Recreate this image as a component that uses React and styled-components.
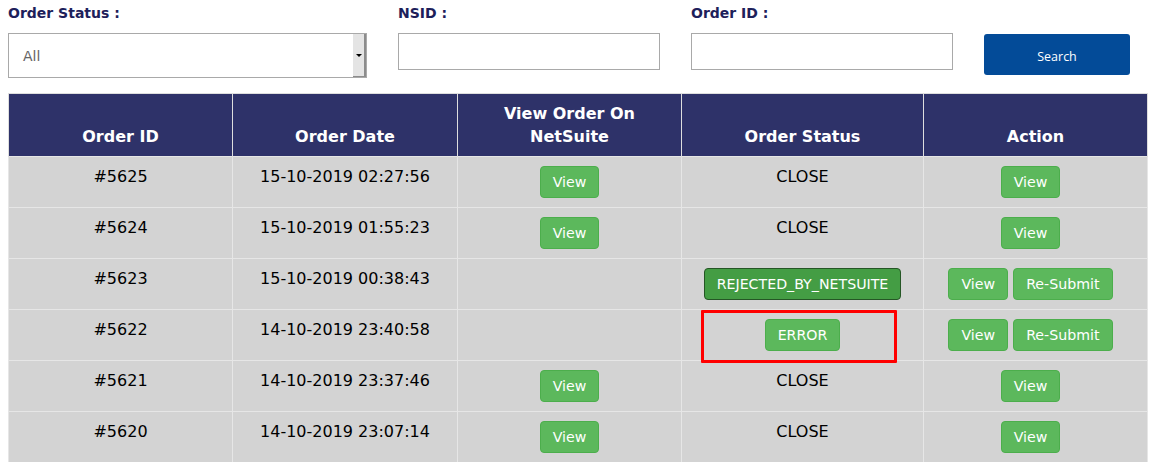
import styled, { createGlobalStyle } from "styled-components";

const orders = [
  { id: "#5625", date: "15-10-2019 02:27:56", netsuite: true, status: "CLOSE" },
  { id: "#5624", date: "15-10-2019 01:55:23", netsuite: true, status: "CLOSE" },
  { id: "#5623", date: "15-10-2019 00:38:43", netsuite: false, status: "REJECTED_BY_NETSUITE" },
  { id: "#5622", date: "14-10-2019 23:40:58", netsuite: false, status: "ERROR", flagged: true },
  { id: "#5621", date: "14-10-2019 23:37:46", netsuite: true, status: "CLOSE" },
  { id: "#5620", date: "14-10-2019 23:07:14", netsuite: true, status: "CLOSE" },
];

const App = () => {
  return (
    <StyledPage>
      <GlobalStyle />
      <StyledFilters>
        <StyledField $width="359px">
          <StyledLabel>Order Status :</StyledLabel>
          <StyledSelect>
            <StyledSelectValue>All</StyledSelectValue>
            <StyledSelectArrow>
              <StyledTriangle />
            </StyledSelectArrow>
          </StyledSelect>
        </StyledField>
        <StyledField $width="262px">
          <StyledLabel>NSID :</StyledLabel>
          <StyledInput />
        </StyledField>
        <StyledField $width="262px">
          <StyledLabel>Order ID :</StyledLabel>
          <StyledInput />
        </StyledField>
        <StyledSearch>Search</StyledSearch>
      </StyledFilters>

      <StyledTable>
        <colgroup>
          <col style={{ width: 224 }} />
          <col style={{ width: 225 }} />
          <col style={{ width: 224 }} />
          <col style={{ width: 242 }} />
          <col style={{ width: 224 }} />
        </colgroup>
        <thead>
          <tr>
            <StyledTh>Order ID</StyledTh>
            <StyledTh>Order Date</StyledTh>
            <StyledTh>
              View Order On
              <br />
              NetSuite
            </StyledTh>
            <StyledTh>Order Status</StyledTh>
            <StyledTh>Action</StyledTh>
          </tr>
        </thead>
        <tbody>
          {orders.map((o) => {
            const failed = o.status !== "CLOSE";
            return (
              <tr key={o.id}>
                <StyledTd>{o.id}</StyledTd>
                <StyledTd>{o.date}</StyledTd>
                <StyledTd>{o.netsuite && <StyledButton>View</StyledButton>}</StyledTd>
                <StyledTd>
                  {o.status === "CLOSE" ? (
                    o.status
                  ) : (
                    <StyledButton $active={o.status === "REJECTED_BY_NETSUITE"}>
                      {o.status}
                    </StyledButton>
                  )}
                  {o.flagged && <StyledHighlight />}
                </StyledTd>
                <StyledTd $action>
                  <StyledButtons>
                    <StyledButton>View</StyledButton>
                    {failed && <StyledButton>Re-Submit</StyledButton>}
                  </StyledButtons>
                </StyledTd>
              </tr>
            );
          })}
        </tbody>
      </StyledTable>
    </StyledPage>
  );
};

const GlobalStyle = createGlobalStyle`
  body {
    margin: 0;
    background: #fff;
    font-family: "DejaVu Sans", sans-serif;
  }
`;

const StyledPage = styled.div`
  padding: 0 8px;
  width: 1139px;
`;

const StyledFilters = styled.div`
  display: flex;
  align-items: flex-start;
  gap: 31px;
  height: 93px;
`;

const StyledField = styled.div`
  width: ${(p) => p.$width};
  display: flex;
  flex-direction: column;
`;

const StyledLabel = styled.label`
  font-size: 14px;
  font-weight: bold;
  color: #1d205a;
  line-height: 17px;
  padding-top: 5px;
  height: 28px;
`;

const StyledSelect = styled.div`
  display: flex;
  height: 45px;
  border: 1px solid #a9a9a9;
  box-sizing: border-box;
  background: #fff;
`;

const StyledSelectValue = styled.div`
  flex: 1;
  padding-left: 14px;
  display: flex;
  align-items: center;
  font-size: 14px;
  color: #666;
`;

const StyledSelectArrow = styled.div`
  width: 11px;
  background: #e4e4e4;
  border-right: 2px solid #8c8c8c;
  border-bottom: 1px solid #8c8c8c;
  display: flex;
  align-items: center;
  justify-content: center;
`;

const StyledTriangle = styled.div`
  width: 0;
  height: 0;
  border-left: 3px solid transparent;
  border-right: 3px solid transparent;
  border-top: 3px solid #000;
`;

const StyledInput = styled.input`
  height: 37px;
  box-sizing: border-box;
  border: 1px solid #a9a9a9;
  outline: none;
`;

const StyledSearch = styled.button`
  margin-top: 34px;
  width: 146px;
  height: 41px;
  border: none;
  border-radius: 3px;
  background: #034b98;
  color: #fff;
  font-family: "Open Sans", sans-serif;
  font-size: 12.5px;
  padding-top: 4px;
`;

const StyledTable = styled.table`
  border-collapse: collapse;
  table-layout: fixed;
  width: 1139px;
  border: 1px solid #dedede;
`;

const StyledTh = styled.th`
  background: #2e3269;
  color: #fff;
  font-size: 16px;
  font-weight: bold;
  line-height: 23px;
  padding: 8px 4px;
  height: 46px;
  vertical-align: bottom;
  border: 1px solid #dedede;
  border-bottom: none;
`;

const StyledTd = styled.td`
  position: relative;
  background: #d3d3d3;
  font-size: 16px;
  line-height: 22px;
  text-align: center;
  vertical-align: top;
  padding: 9px 4px;
  padding-left: ${(p) => (p.$action ? "0" : "4px")};
  padding-right: ${(p) => (p.$action ? "10px" : "4px")};
  height: 32px;
  border: 1px solid #e6e6e6;
  color: #000;
`;

const StyledButtons = styled.div`
  display: flex;
  justify-content: center;
  gap: 5px;
`;

const StyledButton = styled.button`
  height: 32px;
  padding: 0 12px;
  border-radius: 4px;
  font-family: "DejaVu Sans", sans-serif;
  font-size: 14.2px;
  color: #fff;
  background: ${(p) => (p.$active ? "#449d44" : "#5cb85c")};
  border: 1px solid ${(p) => (p.$active ? "#255625" : "#4cae4c")};
`;

const StyledHighlight = styled.div`
  position: absolute;
  z-index: 2;
  left: 19px;
  top: 0;
  width: 196px;
  height: 53px;
  box-sizing: border-box;
  border: 3px solid #f00;
  border-radius: 1px;
  pointer-events: none;
`;

export default App;
